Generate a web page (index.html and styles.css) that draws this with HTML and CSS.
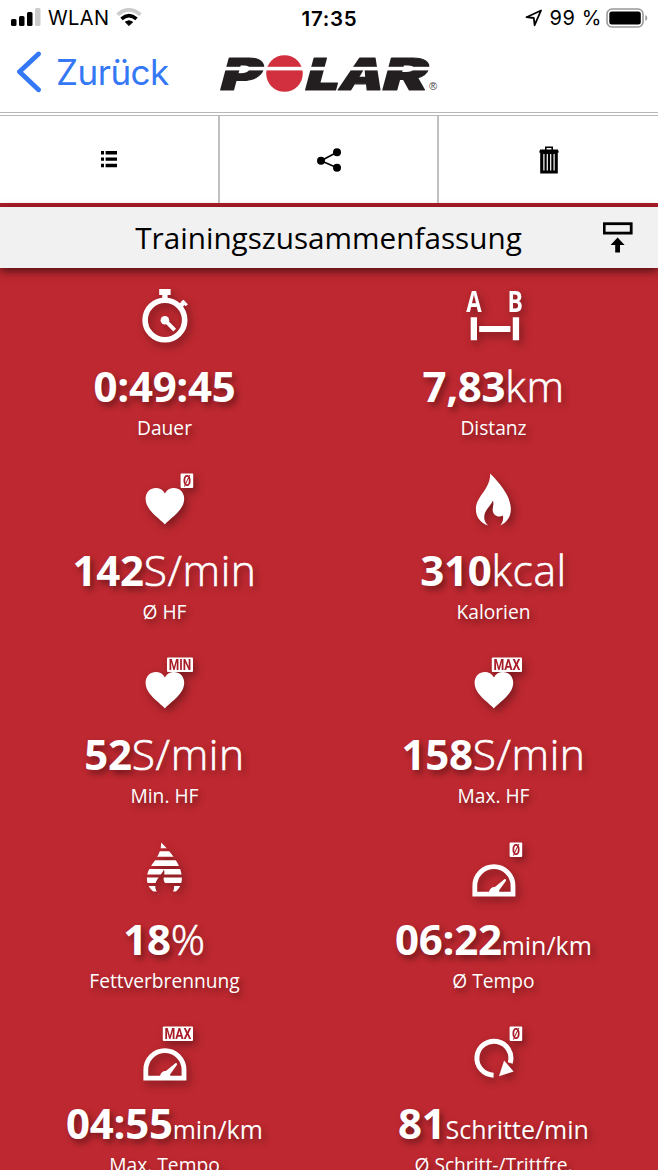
FILE: index.html
```html
<!DOCTYPE html>
<html lang="de">
<head>
    <meta charset="UTF-8">
    <meta name="viewport" content="width=device-width, initial-scale=1.0">
    <title>Trainingszusammenfassung</title>
    <link rel="stylesheet" href="styles.css">
</head>
<body>
    <div class="status-bar">
        <div class="status-left">
            <svg width="30" height="20" viewBox="0 0 30 20">
                <rect x="0" y="11" width="5.5" height="7" rx="1.5"/>
                <rect x="8" y="8" width="5.5" height="10" rx="1.5"/>
                <rect x="16" y="4" width="5.5" height="14" rx="1.5"/>
                <rect x="24" y="0" width="5.5" height="18" rx="1.5" fill="#ccc"/>
            </svg>
            <span class="carrier">WLAN</span>
            <svg width="26" height="20" viewBox="0 0 26 20" fill="none" stroke-width="3.6">
                <path d="M1.5 6.6Q13-3 24.5 6.6" stroke="#ccc"/>
                <path d="M5.5 10.8Q13 4.4 20.5 10.8" stroke="#000"/>
                <path d="M9.4 14Q13 11.4 16.6 14L13 17.6Z" fill="#000" stroke="#000" stroke-width="1"/>
            </svg>
        </div>
        <div class="time">17:35</div>
        <div class="status-right">
            <svg width="18" height="18" viewBox="0 0 18 18" fill="none" stroke="#000" stroke-width="1.8" stroke-linejoin="round">
                <path d="M1.5 8.2L16 1.5L9.6 16.2L8.8 9Z"/>
            </svg>
            <span class="percent">99 %</span>
            <svg width="42" height="20" viewBox="0 0 42 20">
                <rect x="1" y="1" width="36" height="18" rx="5" fill="none" stroke="#999" stroke-width="1.6"/>
                <rect x="3.3" y="3.4" width="31.5" height="13.2" rx="2.5"/>
                <path d="M39.3 7Q41.3 8 41.3 10T39.3 13Z" fill="#999"/>
            </svg>
        </div>
    </div>

    <header class="nav">
        <a class="back" href="#">
            <svg width="26" height="42" viewBox="0 0 26 42" fill="none" stroke="#3478f6" stroke-width="4.8" stroke-linecap="round" stroke-linejoin="round">
                <path d="M22.5 3L3.5 20.8L22.5 38.8"/>
            </svg>
            <span>Zurück</span>
        </a>
        <svg class="logo" width="222" height="40" viewBox="0 0 222 40">
            <g class="logo-text" transform="translate(0 34.6) skewX(-15)">
                <text x="-1" y="0" textLength="41" lengthAdjust="spacingAndGlyphs">P</text>
                <text x="84" y="0" textLength="34" lengthAdjust="spacingAndGlyphs">L</text>
                <text x="118" y="0" textLength="44" lengthAdjust="spacingAndGlyphs">A</text>
                <text x="161" y="0" textLength="45" lengthAdjust="spacingAndGlyphs">R</text>
            </g>
            <circle cx="65.5" cy="18.5" r="18.3" fill="#d2303e"/>
            <rect x="0" y="11.8" width="213" height="3.6" fill="#fff"/>
            <text x="210" y="35" class="reg">®</text>
        </svg>
    </header>

    <nav class="toolbar">
        <a href="#">
            <svg width="16" height="17" viewBox="0 0 16 17">
                <path d="M0 0h3v3.4H0zM4.6 0H16v3.4H4.6zM0 6.4h3v3.4H0zM4.6 6.4H16v3.4H4.6zM0 12.8h3v3.4H0zM4.6 12.8H16v3.4H4.6z"/>
            </svg>
        </a>
        <a href="#">
            <svg width="24" height="24" viewBox="0 0 24 24">
                <path d="M20 4.2L4 12.8L20 19.8" fill="none" stroke="#000" stroke-width="1.6"/>
                <circle cx="4" cy="12.8" r="4"/>
                <circle cx="20" cy="4.2" r="4"/>
                <circle cx="20" cy="19.8" r="4"/>
            </svg>
        </a>
        <a href="#">
            <svg width="20" height="28" viewBox="0 0 20 28">
                <path d="M6.8 4V1.2h6.4V4" fill="none" stroke="#000" stroke-width="1.6"/>
                <path d="M0 6.6L1.2 3.6H18.8L20 6.6zM1.2 6.6H18.8V27.5H1.2z"/>
                <path d="M4.9 8V24.5M8.3 8V24.5M11.7 8V24.5M15.1 8V24.5" stroke="#fff" stroke-width="1.2"/>
            </svg>
        </a>
    </nav>

    <div class="title-bar">
        <h1>Trainingszusammenfassung</h1>
        <svg class="collapse" width="30" height="31" viewBox="0 0 30 31">
            <rect x="1.2" y="1.7" width="27" height="9.4" fill="none" stroke="#000" stroke-width="2.8"/>
            <path d="M14.6 15.5L21.6 22.9H17V30.5H12.2V22.9H7.6z"/>
        </svg>
    </div>

    <main class="stats">
        <div class="stat">
            <svg class="icon" viewBox="0 0 80 64">
                <circle cx="40.5" cy="36" r="19.8" fill="none" stroke="#fff" stroke-width="5.6"/>
                <path d="M34.8 5h11.4v6h-3v4h-5.4v-4h-3z"/>
                <path d="M55 23L60 17.8" stroke="#fff" stroke-width="4.6"/>
                <path d="M58 16.8L62.4 21.2" stroke="#fff" stroke-width="3"/>
                <circle cx="40.5" cy="36.2" r="4.3"/>
                <path d="M40.5 36.2L50.3 46.2" stroke="#fff" stroke-width="3.8"/>
            </svg>
            <div class="value"><b>0:49:45</b></div>
            <div class="label">Dauer</div>
        </div>
        <div class="stat">
            <svg class="icon" viewBox="0 0 80 64">
                <text class="ab" x="12.8" y="28" textLength="15.4" lengthAdjust="spacingAndGlyphs">A</text>
                <text class="ab" x="54" y="28" textLength="15.4" lengthAdjust="spacingAndGlyphs">B</text>
                <path d="M17.3 33.3h6.3v23h-6.3zM59.4 33.3h6.3v23h-6.3zM25.8 42h31.2v6H25.8z"/>
            </svg>
            <div class="value"><b>7,83</b>km</div>
            <div class="label">Distanz</div>
        </div>
        <div class="stat">
            <svg class="icon" viewBox="0 0 80 64">
                <path d="M40.5 56.4C34 49.5 21.2 42 21.2 30.8C21.2 18.5 36 16.5 40.5 25.4C45 16.5 59.8 18.5 59.8 30.8C59.8 42 47 49.5 40.5 56.4Z"/>
                <rect x="56.2" y="5.4" width="12.6" height="14.6" rx="1"/>
                <text class="tag" x="58.5" y="18" textLength="8" lengthAdjust="spacingAndGlyphs">Ø</text>
            </svg>
            <div class="value"><b>142</b>S/min</div>
            <div class="label">Ø HF</div>
        </div>
        <div class="stat">
            <svg class="icon" viewBox="0 0 80 64">
                <path id="flame" d="M36.8 5.5C44 13 57.5 27 57.5 41C57.5 49.5 53 54.5 46.8 57.6C49.5 54.5 50.2 51 49.5 47.6C44.5 50.5 39.5 46.5 39.3 42.5C39.1 39 40.8 36.5 39.5 32.5C37.5 38 31.2 41.5 30.8 49C30.7 52.5 32.5 55.5 34.8 57.6C27 54.8 22.5 49 22.5 41.5C22.5 28 37 22 36.8 5.5Z"/>
            </svg>
            <div class="value"><b>310</b>kcal</div>
            <div class="label">Kalorien</div>
        </div>
        <div class="stat">
            <svg class="icon" viewBox="0 0 80 64">
                <path d="M40.5 56.4C34 49.5 21.2 42 21.2 30.8C21.2 18.5 36 16.5 40.5 25.4C45 16.5 59.8 18.5 59.8 30.8C59.8 42 47 49.5 40.5 56.4Z"/>
                <rect x="42.6" y="5.4" width="26" height="14.6" rx="1"/>
                <text class="tag" x="44.4" y="18" textLength="22.4" lengthAdjust="spacingAndGlyphs">MIN</text>
            </svg>
            <div class="value"><b>52</b>S/min</div>
            <div class="label">Min. HF</div>
        </div>
        <div class="stat">
            <svg class="icon" viewBox="0 0 80 64">
                <path d="M40.5 56.4C34 49.5 21.2 42 21.2 30.8C21.2 18.5 36 16.5 40.5 25.4C45 16.5 59.8 18.5 59.8 30.8C59.8 42 47 49.5 40.5 56.4Z"/>
                <rect x="38.4" y="5.4" width="30.2" height="14.6" rx="1"/>
                <text class="tag" x="40" y="18" textLength="27" lengthAdjust="spacingAndGlyphs">MAX</text>
            </svg>
            <div class="value"><b>158</b>S/min</div>
            <div class="label">Max. HF</div>
        </div>
        <div class="stat">
            <svg class="icon" viewBox="0 0 80 64">
                <clipPath id="stripes">
                    <path d="M0 5h80v6.2H0zM0 14.3h80v5.5H0zM0 23.2h80V29H0zM0 32.1h80v5.3H0zM0 40.5h80v5.4H0zM0 49.1h80v5.4H0zM0 57h80v3H0z"/>
                </clipPath>
                <use href="#flame" clip-path="url(#stripes)"/>
            </svg>
            <div class="value"><b>18</b>%</div>
            <div class="label">Fettverbrennung</div>
        </div>
        <div class="stat">
            <svg class="icon" viewBox="0 0 80 64">
                <g id="gauge">
                    <path d="M21.4 57.2V49A19.1 19.4 0 0 1 59.6 49V57.2Z" fill="none" stroke="#fff" stroke-width="4.8"/>
                    <path d="M35.6 56C35.8 51.8 38.5 50 41.5 50L51.3 41.9Q53.2 41.8 52.6 43.8L45.8 53.2V56Z"/>
                </g>
                <rect x="56.2" y="5.4" width="12.6" height="14.6" rx="1"/>
                <text class="tag" x="58.5" y="18" textLength="8" lengthAdjust="spacingAndGlyphs">Ø</text>
            </svg>
            <div class="value"><b>06:22</b><small>min/km</small></div>
            <div class="label">Ø Tempo</div>
        </div>
        <div class="stat">
            <svg class="icon" viewBox="0 0 80 64">
                <use href="#gauge"/>
                <rect x="38.4" y="5.4" width="30.2" height="14.6" rx="1"/>
                <text class="tag" x="40" y="18" textLength="27" lengthAdjust="spacingAndGlyphs">MAX</text>
            </svg>
            <div class="value"><b>04:55</b><small>min/km</small></div>
            <div class="label">Max. Tempo</div>
        </div>
        <div class="stat">
            <svg class="icon" viewBox="0 0 80 64">
                <path d="M40.2 54.2A17 17 0 1 1 56.8 42" fill="none" stroke="#fff" stroke-width="5"/>
                <path d="M50.7 39.5L60.2 50.5L45.6 55.2Z"/>
                <rect x="56.2" y="5.4" width="12.6" height="14.6" rx="1"/>
                <text class="tag" x="58.5" y="18" textLength="8" lengthAdjust="spacingAndGlyphs">Ø</text>
            </svg>
            <div class="value"><b>81</b><small>Schritte/min</small></div>
            <div class="label">Ø Schritt-/Trittfre.</div>
        </div>
    </main>
</body>
</html>
```
FILE: styles.css
```css
body {
    margin: 0;
    height: 1170px;
    overflow: hidden;
    background-color: #be2830;
    color: #000;
    font-family: 'Open Sans', sans-serif;
}
svg {
    display: block;
    flex-shrink: 0;
}
.status-bar {
    display: grid;
    grid-template-columns: 1fr auto 1fr;
    align-items: center;
    height: 36px;
    padding: 0 10px 0 11px;
    background-color: #fff;
    font-family: Inter, sans-serif;
    font-size: 20px;
}
.status-left, .status-right {
    display: flex;
    align-items: center;
}
.status-left {
    gap: 7px;
}
.carrier {
    letter-spacing: 0.4px;
}
.time {
    font-weight: 600;
    font-size: 20.5px;
    letter-spacing: 0.7px;
}
.status-right {
    justify-content: flex-end;
    gap: 4px;
}
.status-right .percent {
    margin-left: 3px;
    letter-spacing: 0.6px;
}
.nav {
    display: flex;
    align-items: flex-start;
    height: 76px;
    background-color: #fff;
}
.back {
    display: flex;
    align-items: center;
    gap: 14px;
    width: 203px;
    padding: 15px 0 0 16px;
    box-sizing: border-box;
    color: #3478f6;
    font-family: Inter, sans-serif;
    font-size: 35px;
    letter-spacing: -0.5px;
    line-height: 42px;
    text-decoration: none;
}
.logo {
    margin: 19px 0 0 16px;
    overflow: visible;
}
.logo-text {
    font-family: Inter, sans-serif;
    font-size: 44px;
    font-weight: 900;
    fill: #231f20;
    stroke: #231f20;
    stroke-width: 1.2;
    stroke-linejoin: round;
}
.reg {
    font-family: 'Liberation Sans', sans-serif;
    font-size: 11px;
    fill: #444;
}
.toolbar {
    display: grid;
    grid-template-columns: 220px 219px 219px;
    height: 87px;
    border-top: 4px double #b8b8b8;
    border-bottom: 4px solid #ae1d27;
    background-color: #fff;
}
.toolbar a {
    display: flex;
    justify-content: center;
    align-items: center;
    border-right: 2px solid #c0c0c0;
}
.toolbar a:last-child {
    border-right: none;
}
.title-bar {
    display: flex;
    align-items: center;
    height: 61px;
    padding: 0 25px 0 54px;
    background-color: #f1f1f1;
    box-shadow: 0 3px 9px rgba(0, 0, 0, 0.6);
}
h1 {
    flex: 1;
    margin: 0;
    font-size: 29.7px;
    font-weight: 400;
    text-align: center;
}
.stats {
    display: grid;
    grid-template-columns: 1fr 1fr;
    grid-auto-rows: 184.2px;
    padding-top: 16px;
    color: #fff;
    text-align: center;
}
.icon {
    width: 80px;
    height: 64px;
    margin: 0 auto;
    fill: #fff;
    overflow: visible;
    filter: drop-shadow(3px 4px 4px rgba(0, 0, 0, 0.35));
    transform: translateX(-0.6px);
}
.value {
    height: 64px;
    font-size: 42.5px;
    font-weight: 300;
    line-height: 75px;
    letter-spacing: 0.6px;
    white-space: nowrap;
    text-shadow: 3px 4px 6px rgba(0, 0, 0, 0.4);
    -webkit-text-stroke: 0.6px #fff;
}
.value b {
    font-size: 42px;
    font-weight: 700;
    letter-spacing: -0.3px;
    -webkit-text-stroke: 0;
}
.value small {
    font-size: 25px;
    font-weight: 400;
    letter-spacing: 0;
    -webkit-text-stroke: 0;
}
.label {
    font-size: 19.2px;
    line-height: 32px;
    text-shadow: 3px 4px 6px rgba(0, 0, 0, 0.4);
}
.ab {
    font-size: 28px;
    font-weight: 700;
}
.tag {
    font-family: Roboto, sans-serif;
    font-size: 14.5px;
    font-weight: 700;
    fill: #a81c28;
}
```
